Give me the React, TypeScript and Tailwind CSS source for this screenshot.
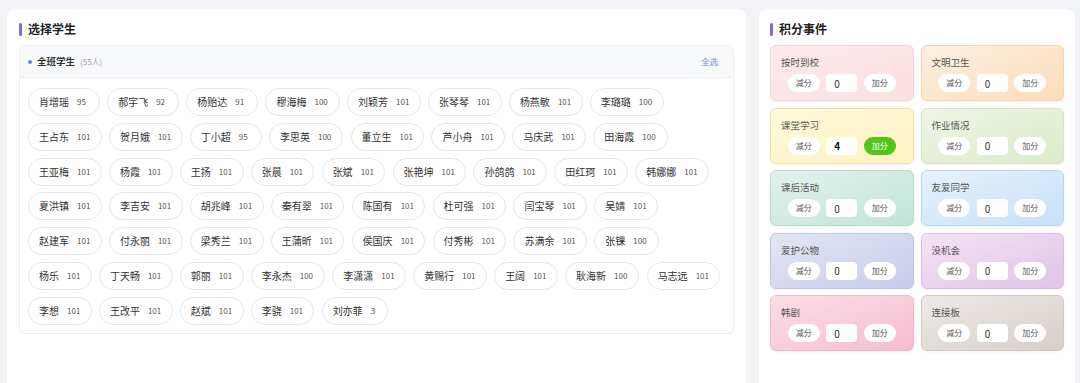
import React from "react";

type S = [string, number];

const rows: S[][] = [
  [["肖增瑶", 95], ["郝宇飞", 92], ["杨贻达", 91], ["穆海梅", 100], ["刘颖芳", 101], ["张琴琴", 101], ["杨燕敏", 101], ["李璐璐", 100]],
  [["王占东", 101], ["贺月娥", 101], ["丁小超", 95], ["李思英", 100], ["董立生", 101], ["芦小舟", 101], ["马庆武", 101], ["田海霞", 100]],
  [["王亚梅", 101], ["杨霞", 101], ["王扬", 101], ["张晨", 101], ["张斌", 101], ["张艳坤", 101], ["孙鸽鸽", 101], ["田红珂", 101], ["韩娜娜", 101]],
  [["夏洪镇", 101], ["李吉安", 101], ["胡兆峰", 101], ["秦有翠", 101], ["陈国有", 101], ["杜可强", 101], ["闫宝琴", 101], ["吴婧", 101]],
  [["赵建军", 101], ["付永丽", 101], ["梁秀兰", 101], ["王蒲昕", 101], ["侯国庆", 101], ["付秀彬", 101], ["苏满余", 101], ["张锞", 100]],
  [["杨乐", 101], ["丁天畅", 101], ["郭丽", 101], ["李永杰", 100], ["李潇潇", 101], ["黄赐行", 101], ["王阔", 101], ["耿海新", 100], ["马志远", 101]],
  [["李想", 101], ["王改平", 101], ["赵斌", 101], ["李骁", 101], ["刘亦菲", 3]],
];

type Ev = { name: string; cls: string; value: string; active?: boolean };

const events: Ev[] = [
  { name: "按时到校", cls: "from-[#fdeaec] to-[#fbdee2] border-[#f6d3d8]", value: "0" },
  { name: "文明卫生", cls: "from-[#fdf0e2] to-[#fddcb8] border-[#f8d6ad]", value: "0" },
  { name: "课堂学习", cls: "from-[#fff9da] to-[#fff2c2] border-[#f1e2a3]", value: "4", active: true },
  { name: "作业情况", cls: "from-[#eef5e4] to-[#dcebcb] border-[#d6e6c4]", value: "0" },
  { name: "课后活动", cls: "from-[#e2f2ed] to-[#c0e4d8] border-[#b9dccf]", value: "0" },
  { name: "友爱同学", cls: "from-[#e7f2fc] to-[#c6e0f8] border-[#bad7f2]", value: "0" },
  { name: "爱护公物", cls: "from-[#e4e6f5] to-[#c7cbe9] border-[#c0c4e3]", value: "0" },
  { name: "没机会", cls: "from-[#f3e4f4] to-[#e0c3e7] border-[#dbbee2]", value: "0" },
  { name: "韩剧", cls: "from-[#fcdee7] to-[#f5bcd0] border-[#f0b8cb]", value: "0" },
  { name: "连接板", cls: "from-[#eeeae8] to-[#d6cec9] border-[#d2cac5]", value: "0" },
];

function scoreGap(s: number) {
  if (s === 100) return "mr-[0.7px]";
  if (s >= 100) return "";
  if (s >= 10) return "mr-[2.7px]";
  return "mr-[1.2px]";
}

function Title({ text }: { text: string }) {
  return (
    <div className="flex items-center gap-[6px] h-[14px]">
      <div className="w-[3px] h-[13px] rounded-[2px] bg-[#7a6ce6]" />
      <div className="text-[12px] leading-[14px] font-bold text-[#222]">{text}</div>
    </div>
  );
}

export default function App() {
  return (
    <div className="w-[1080px] h-[383px] overflow-hidden bg-[#f2f3f7] flex gap-[13px] pl-[7px] pr-[5px] pt-[9px] font-['Noto_Sans_CJK_SC',sans-serif]">
      <div className="w-[739px] h-[400px] shrink-0 bg-white rounded-[8px] px-[12px] pt-[13px]">
        <Title text="选择学生" />
        <div className="mt-[9px] border border-[#eceef2] rounded-[6px]">
          <div className="h-[32px] bg-[#f8f9fb] border-b border-[#eceef2] rounded-t-[6px] flex items-center pl-[8px] pr-[15px]">
            <div className="w-[4px] h-[4px] rounded-full bg-[#6b7fe6]" />
            <div className="ml-[5px] text-[9.5px] font-bold text-[#333]">全班学生</div>
            <div className="ml-[5px] text-[8px] text-[#a0a4ab]">(55人)</div>
            <div className="ml-auto text-[8.5px] text-[#6f8ef0]">全选</div>
          </div>
          <div className="pl-[8px] pt-[10px] pb-[8px] flex flex-col gap-[6.8px]">
            {rows.map((r, i) => (
              <div key={i} className="flex gap-[7.2px]">
                {r.map(([n, s]) => (
                  <div
                    key={n}
                    className="h-[28px] shrink-0 whitespace-nowrap rounded-full border border-[#e4e6ea] bg-white pl-[10px] pr-[10.4px] flex items-center gap-[8px]"
                  >
                    <span className="text-[10px] text-[#333] leading-none">{n}</span>
                    <span className={`text-[8px] text-[#555] leading-none ${scoreGap(s)}`}>{s}</span>
                  </div>
                ))}
              </div>
            ))}
          </div>
        </div>
      </div>
      <div className="w-[316px] h-[400px] shrink-0 bg-white rounded-[8px] px-[11px] pt-[13px]">
        <Title text="积分事件" />
        <div className="mt-[9px] grid grid-cols-2 gap-x-[7px] gap-y-[6.5px]">
          {events.map((e) => (
            <div
              key={e.name}
              className={`h-[56px] rounded-[6px] border bg-linear-to-br shadow-[0_1px_3px_rgba(0,0,0,0.06)] px-[10px] pt-[10px] ${e.cls}`}
            >
              <div className="text-[9.5px] leading-[12px] text-[#555]">{e.name}</div>
              <div className="mt-[6px] flex justify-center gap-[6.5px]">
                <div className="w-[32px] h-[18px] rounded-full bg-white flex items-center justify-center text-[8px] text-[#555]">减分</div>
                <div className={`w-[31px] h-[18px] rounded-[4px] bg-white flex items-center pl-[8px] text-[10px] ${e.active ? "font-bold text-[#111]" : "text-[#333]"}`}>
                  {e.value}
                </div>
                <div
                  className={`w-[32px] h-[18px] rounded-full flex items-center justify-center text-[8px] ${
                    e.active ? "bg-[#52c41a] text-white" : "bg-white text-[#555]"
                  }`}
                >
                  加分
                </div>
              </div>
            </div>
          ))}
        </div>
      </div>
    </div>
  );
}
